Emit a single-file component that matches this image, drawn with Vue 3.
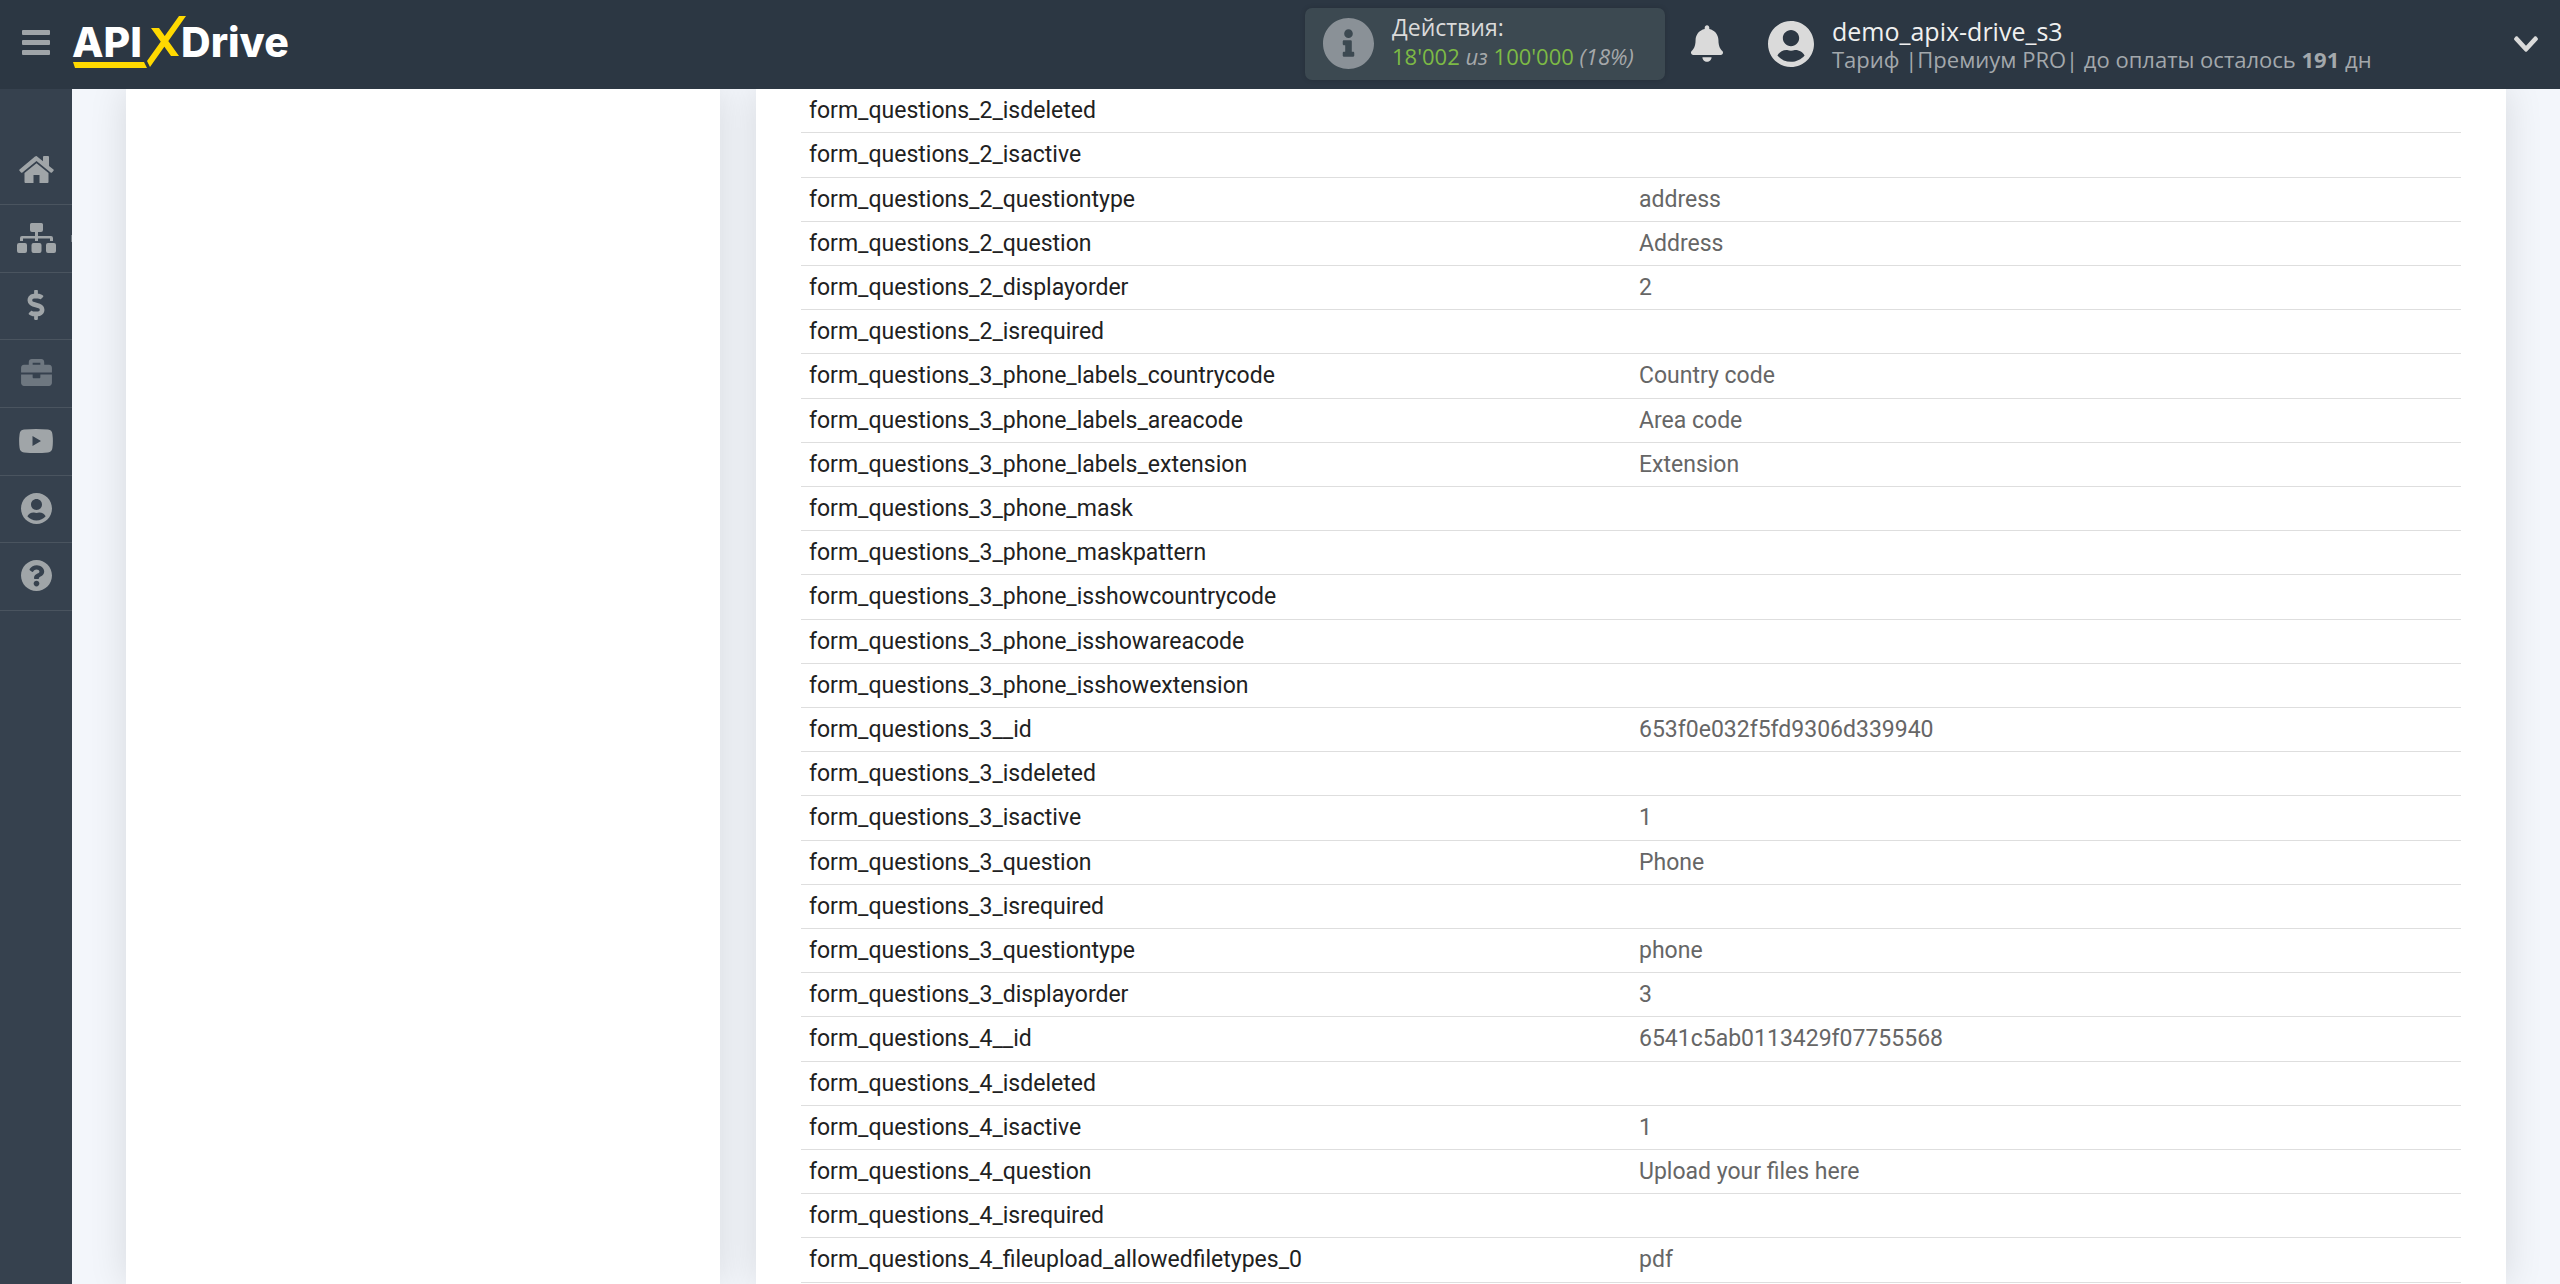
<script setup>
const menu = [
  { title: 'Главная', box: '0 0 35 27', w: 35, h: 27, path: 'M17.5 0 L24 5.200 V1 Q24 0 25 0 H29 Q30 0 30 1 V10 L34.500 13.600 Q35 14.200 34.500 14.800 L33 16.500 Q32.300 17 31.600 16.500 L17.500 5 L3.400 16.500 Q2.700 17 2 16.500 L.5 14.800 Q0 14.200 .5 13.600 L16 .6 Q17.500 -.4 19 .6 Z M17.500 7.200 L29.500 17 V26 Q29.500 27 28.500 27 H20.500 V19 H14.500 V27 H6.500 Q5.500 27 5.500 26 V17 Z' },
  { title: 'Связи', box: '0 0 39 30', w: 39, h: 30, sub: true, path: 'M14.500 0 H24.500 Q26 0 26 1.500 V7 Q26 9 24 9 H21 V13 H34 Q36 13 36 15 V18 H33 V15.500 H21 V18 H18 V15.500 H6 V18 H3 V15 Q3 13 5 13 H18 V9 H15 Q13 9 13 7 V1.500 Q13 0 14.500 0 Z M2 20 H8 Q10 20 10 22 V28 Q10 30 8 30 H2 Q0 30 0 28 V22 Q0 20 2 20 Z M16.500 20 H22.500 Q24.500 20 24.500 22 V28 Q24.500 30 22.500 30 H16.500 Q14.500 30 14.500 28 V22 Q14.500 20 16.500 20 Z M31 20 H37 Q39 20 39 22 V28 Q39 30 37 30 H31 Q29 30 29 28 V22 Q29 20 31 20 Z' },
  { title: 'Оплата', box: '0 0 288 512', w: 18, h: 30, path: 'M209.2 233.4l-108-31.6C88.7 198.2 80 186.5 80 173.5c0-16.3 13.2-29.5 29.5-29.5h66.3c12.2 0 24.2 3.7 34.2 10.5 6.1 4.1 14.3 3.1 19.5-2l34.8-34c7.1-6.9 6.1-18.4-1.8-24.5C238 74.8 207.4 64.1 176 64V16c0-8.8-7.2-16-16-16h-32c-8.8 0-16 7.2-16 16v48h-2.5C45.8 64-5.4 118.7.5 183.6c4.2 46.1 39.4 83.6 83.8 96.6l102.5 30c12.5 3.7 21.2 15.3 21.2 28.3 0 16.3-13.2 29.5-29.5 29.5h-66.3C100 368 88 364.3 78 357.5c-6.1-4.1-14.3-3.1-19.5 2l-34.8 34c-7.1 6.9-6.1 18.4 1.8 24.5 24.5 19.2 55.1 29.9 86.5 30v48c0 8.8 7.2 16 16 16h32c8.8 0 16-7.2 16-16v-48.2c46.6-.9 90.3-28.6 105.7-72.7 21.5-61.6-14.6-124.8-72.5-141.7z' },
  { title: 'Проекты', box: '0 32 512 448', w: 31, h: 27, dim: true, path: 'M320 336c0 8.84-7.16 16-16 16h-96c-8.84 0-16-7.16-16-16v-48H0v144c0 25.6 22.4 48 48 48h416c25.6 0 48-22.4 48-48V288H320v48zm144-208h-80V80c0-25.6-22.4-48-48-48H176c-25.6 0-48 22.4-48 48v48H48c-25.6 0-48 22.4-48 48v80h512v-80c0-25.6-22.4-48-48-48zm-144 0H192V96h128v32z' },
  { title: 'Видео', box: '0 0 34 24', w: 34, h: 24, path: 'M5 .6 Q17 -.6 29 .6 Q33 1 33.400 5 Q34.400 12 33.400 19 Q33 23 29 23.400 Q17 24.600 5 23.400 Q1 23 .6 19 Q-.4 12 .6 5 Q1 1 5 .6 Z M13.500 7 V17 L22 12 Z' },
  { title: 'Профиль', box: '0 8 496 496', w: 31, h: 31, path: 'M248 8C111 8 0 119 0 256s111 248 248 248 248-111 248-248S385 8 248 8zm0 96c48.6 0 88 39.4 88 88s-39.4 88-88 88-88-39.4-88-88 39.4-88 88-88zm0 344c-58.7 0-111.3-26.6-146.5-68.2 18.8-35.4 55.6-59.8 98.5-59.8 2.4 0 4.8.4 7.1 1.1 13 4.2 26.6 6.9 40.9 6.9 14.3 0 28-2.7 40.9-6.9 2.3-.7 4.7-1.1 7.1-1.1 42.9 0 79.7 24.4 98.5 59.8C359.3 421.4 306.7 448 248 448z' },
  { title: 'Помощь', box: '8 8 496 496', w: 31, h: 31, path: 'M504 256c0 136.997-111.043 248-248 248S8 392.997 8 256C8 119.083 119.043 8 256 8s248 111.083 248 248zM262.655 90c-54.497 0-89.255 22.957-116.549 63.758-3.536 5.286-2.353 12.415 2.715 16.258l34.699 26.31c5.205 3.947 12.621 3.008 16.665-2.122 17.864-22.658 30.113-35.797 57.303-35.797 20.429 0 45.698 13.148 45.698 32.958 0 14.976-12.363 22.667-32.534 33.976C247.128 238.528 216 254.941 216 296v4c0 6.627 5.373 12 12 12h56c6.627 0 12-5.373 12-12v-1.333c0-28.462 83.186-29.647 83.186-106.667 0-58.002-60.165-102-116.531-102zM256 338c-25.365 0-46 20.635-46 46 0 25.364 20.635 46 46 46s46-20.636 46-46c0-25.365-20.635-46-46-46z' }
]
const userPath = menu[5].path

const rows = [
  ['form_questions_2_isdeleted', ''],
  ['form_questions_2_isactive', ''],
  ['form_questions_2_questiontype', 'address'],
  ['form_questions_2_question', 'Address'],
  ['form_questions_2_displayorder', '2'],
  ['form_questions_2_isrequired', ''],
  ['form_questions_3_phone_labels_countrycode', 'Country code'],
  ['form_questions_3_phone_labels_areacode', 'Area code'],
  ['form_questions_3_phone_labels_extension', 'Extension'],
  ['form_questions_3_phone_mask', ''],
  ['form_questions_3_phone_maskpattern', ''],
  ['form_questions_3_phone_isshowcountrycode', ''],
  ['form_questions_3_phone_isshowareacode', ''],
  ['form_questions_3_phone_isshowextension', ''],
  ['form_questions_3__id', '653f0e032f5fd9306d339940'],
  ['form_questions_3_isdeleted', ''],
  ['form_questions_3_isactive', '1'],
  ['form_questions_3_question', 'Phone'],
  ['form_questions_3_isrequired', ''],
  ['form_questions_3_questiontype', 'phone'],
  ['form_questions_3_displayorder', '3'],
  ['form_questions_4__id', '6541c5ab0113429f07755568'],
  ['form_questions_4_isdeleted', ''],
  ['form_questions_4_isactive', '1'],
  ['form_questions_4_question', 'Upload your files here'],
  ['form_questions_4_isrequired', ''],
  ['form_questions_4_fileupload_allowedfiletypes_0', 'pdf']
]
</script>

<template>
  <div class="page">
    <header class="topbar">
      <button class="burger" type="button" aria-label="Меню">
        <span></span><span></span><span></span>
      </button>
      <a class="logo" href="#" aria-label="APIXDrive">
        <svg width="222" height="56" viewBox="72 14 222 56">
          <text class="word" x="72" y="57">API</text>
          <text class="word" x="181" y="57">Drive</text>
          <path fill="#ffd900" d="M179 16H186L150 67L147 61ZM151 28H159L179 56H171ZM73 62H144L147 68H75Z" />
        </svg>
      </a>

      <div class="actions">
        <svg class="info" width="51" height="51" viewBox="8 8 496 496">
          <path fill="currentColor" d="M256 8C119.043 8 8 119.083 8 256c0 136.997 111.043 248 248 248s248-111.003 248-248C504 119.083 392.957 8 256 8zm0 110c23.196 0 42 18.804 42 42s-18.804 42-42 42-42-18.804-42-42 18.804-42 42-42zm56 254c0 6.627-5.373 12-12 12h-88c-6.627 0-12-5.373-12-12v-24c0-6.627 5.373-12 12-12h12v-64h-12c-6.627 0-12-5.373-12-12v-24c0-6.627 5.373-12 12-12h64c6.627 0 12 5.373 12 12v100h12c6.627 0 12 5.373 12 12v24z" />
        </svg>
        <div class="usage">
          <div class="usage-title">Действия:</div>
          <div class="usage-count"><b>18'002</b> <i>из</i> <b>100'000</b> <i>(18%)</i></div>
        </div>
      </div>

      <button class="bell" type="button" aria-label="Уведомления">
        <svg width="32" height="37" viewBox="0 0 448 512">
          <path fill="currentColor" d="M224 512c35.32 0 63.97-28.65 63.97-64H160.03c0 35.35 28.65 64 63.97 64zm215.39-149.71c-19.32-20.76-55.47-51.99-55.47-154.29 0-77.7-54.48-139.9-127.94-155.16V32c0-17.67-14.32-32-31.98-32s-31.98 14.33-31.98 32v20.84C118.56 68.1 64.08 130.3 64.08 208c0 102.3-36.15 133.53-55.47 154.29-6 6.45-8.66 14.16-8.61 21.71.11 16.4 12.98 32 32.1 32h383.8c19.12 0 32-15.6 32.1-32 .05-7.55-2.61-15.27-8.61-21.71z" />
        </svg>
      </button>

      <button class="account" type="button">
        <svg width="46" height="46" viewBox="0 8 496 496"><path fill="currentColor" :d="userPath" /></svg>
        <span class="account-text">
          <span class="account-name">demo_apix-drive_s3</span>
          <span class="account-plan">Тариф |Премиум PRO| до оплаты осталось <strong>191</strong> дн</span>
        </span>
        <svg class="chevron" width="24" height="16" viewBox="5 120 438 272" preserveAspectRatio="none">
          <path fill="currentColor" d="M207.029 381.476L12.686 187.132c-9.373-9.373-9.373-24.569 0-33.941l22.667-22.667c9.357-9.357 24.522-9.375 33.901-.04L224 284.505l154.745-154.021c9.379-9.335 24.544-9.317 33.901.04l22.667 22.667c9.373 9.373 9.373 24.569 0 33.941L240.971 381.476c-9.373 9.372-24.569 9.372-33.942 0z" />
        </svg>
      </button>
    </header>

    <div class="body">
      <nav class="sidebar">
        <a v-for="m in menu" :key="m.title" href="#" class="item" :class="{ dim: m.dim, sub: m.sub }" :aria-label="m.title">
          <svg :width="m.w" :height="m.h" :viewBox="m.box"><path fill="currentColor" fill-rule="evenodd" :d="m.path" /></svg>
        </a>
      </nav>

      <main class="content">
        <aside class="card steps"></aside>
        <section class="card data">
          <table>
            <tbody>
              <tr v-for="[key, value] in rows" :key="key">
                <th scope="row">{{ key }}</th>
                <td>{{ value }}</td>
              </tr>
            </tbody>
          </table>
        </section>
      </main>
    </div>
  </div>
</template>

<style>
body {
  margin: 0;
}
</style>

<style scoped>
.page {
  display: flex;
  flex-direction: column;
  min-height: 100vh;
  background: #f3f6fb;
  font-family: "Open Sans", "Noto Sans", sans-serif;
}
button {
  border: 0;
  padding: 0;
  background: none;
  font: inherit;
  text-align: left;
  cursor: pointer;
}
svg {
  display: block;
  flex: none;
}
.topbar {
  position: sticky;
  top: 0;
  z-index: 1;
  display: flex;
  align-items: center;
  box-sizing: border-box;
  height: 89px;
  padding-bottom: 2px;
  background: #2c3743;
  color: #dadada;
}
.burger {
  display: flex;
  flex-direction: column;
  gap: 5px;
  margin: 0 22px;
  padding-bottom: 3px;
}
.burger span {
  width: 28px;
  height: 5px;
  border-radius: 1px;
  background: #9fa4a8;
}
.logo {
  padding-bottom: 3px;
}
.word {
  fill: #fff;
  font: 800 41px "Inter", sans-serif;
}
.actions {
  display: flex;
  align-items: center;
  gap: 18px;
  box-sizing: border-box;
  width: 360px;
  height: 72px;
  margin-left: auto;
  padding-left: 18px;
  border-radius: 7px;
  background: #3c4951;
  box-shadow: 0 0 5px rgba(0, 0, 0, 0.15);
}
.info {
  color: #8a9197;
}
.usage {
  padding-bottom: 4px;
}
.usage-title,
.usage-count {
  font-size: 23px;
  line-height: 29px;
  white-space: nowrap;
}
.usage-count {
  font-size: 22px;
  color: #a5a8aa;
}
.usage-count b {
  font-weight: 400;
  color: #7dba45;
}
.bell {
  margin: 0 45px 0 26px;
  color: #dadada;
}
.account {
  display: flex;
  align-items: center;
  gap: 18px;
  width: 792px;
  color: #dadada;
}
.account-text {
  display: flex;
  flex-direction: column;
  line-height: 28px;
  white-space: nowrap;
  padding-top: 2px;
}
.account-name {
  font-size: 25px;
  color: #f0f0f0;
}
.account-plan {
  font-size: 22px;
  color: #a3a8ac;
}
.chevron {
  margin: 0 22px 0 auto;
}
.body {
  display: flex;
  flex: 1;
}
.sidebar {
  flex: none;
  width: 72px;
  padding-top: 48px;
  background: #36414e;
}
.item {
  display: flex;
  align-items: center;
  justify-content: center;
  box-sizing: border-box;
  height: 68px;
  padding-bottom: 2px;
  border-bottom: 1px solid #4a545f;
  color: #a0a5a8;
}
.item:nth-child(3n) {
  height: 67px;
}
.dim {
  color: #6e7780;
}
.sub {
  background: linear-gradient(#727b84, #727b84) right center / 1px 7px no-repeat;
}
.content {
  display: flex;
  flex: 1;
  gap: 36px;
  padding: 0 54px;
}
.card {
  background: #fff;
  box-shadow: 0 0 36px rgba(0, 0, 0, 0.12);
}
.steps {
  flex: 594;
}
.data {
  flex: 1660;
  padding: 0 45px;
}
table {
  width: 100%;
  table-layout: fixed;
  border-collapse: separate;
  border-spacing: 0;
  font-family: "Roboto", sans-serif;
  font-size: 23px;
  line-height: 26px;
}
th,
td {
  box-sizing: border-box;
  height: 44px;
  padding: 0 8px;
  border-bottom: 1px solid #dedede;
  text-align: left;
  font-weight: 400;
  color: #212121;
}
td {
  color: #666;
}
tr:nth-child(5n + 2) > * {
  height: 45px;
}
</style>
